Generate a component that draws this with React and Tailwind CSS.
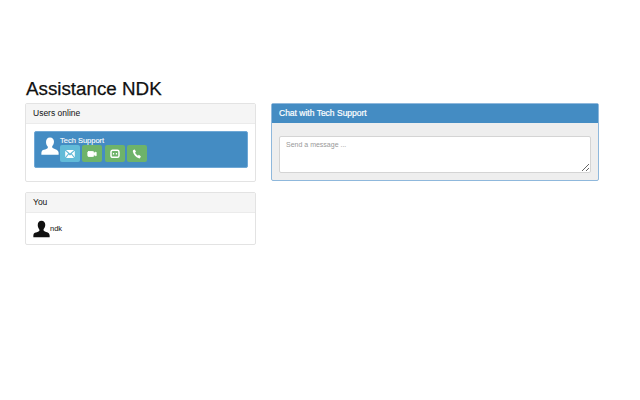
import { Video } from "lucide-react";

// Silhouette avatar used for both users
function Avatar({ className }) {
  return (
    <svg viewBox="0 0 24 24" className={className} fill="currentColor">
      <path d="M12 .5c-3.400 0-5.300 2.600-5.300 6 0 2.400.8 4.400 2 5.800.5.600.6 1.500.3 2.300-.5 1.100-3 1.800-5 2.500C2.200 17.300.8 18.500.5 21v2.500h23V21c-.3-2.500-1.700-3.700-3.500-4.400-2-.7-4.500-1.400-5-2.500-.3-.8-.2-1.700.3-2.300 1.200-1.400 2-3.400 2-5.800C17.300 3.100 15.400.5 12 .5z" />
    </svg>
  );
}

function MailIcon() {
  return (
    <svg viewBox="0 0 12 10" className="w-[10px] h-[8px]" fill="currentColor">
      <path d="M1 0h10L6 4.500z" />
      <path d="M0 1v8l3.700-4.500zM12 1v8L8.300 4.500zM1 10h10L7.600 5.500 6 6.800 4.400 5.500z" />
    </svg>
  );
}

function ChatIcon() {
  return (
    <svg viewBox="0 0 12 12" className="w-[10px] h-[10px]" fill="none" stroke="currentColor" strokeWidth="1.800">
      <rect x="1.200" y="1.500" width="9.600" height="8.500" rx="2" />
      <path d="M3.500 5.700h1.500M7 5.700h1.500" />
    </svg>
  );
}

function PhoneIcon() {
  return (
    <svg viewBox="0 0 12 12" className="w-[10px] h-[10px]" fill="currentColor">
      <path d="M1.500 1.200 3.300.6l1.500 2.600-1.100 1c.5 1.500 1.800 3 3.400 3.800l1.100-1 2.400 1.700-.7 1.900c-.3.600-1 .8-1.700.6C4.700 9.900 1.900 6.900 1 3c-.1-.7.100-1.400.5-1.800z" />
    </svg>
  );
}

function ActionButton({ color, children }) {
  return (
    <div className={`w-5 h-[17px] rounded-[2px] flex items-center justify-center text-white ${color}`}>
      {children}
    </div>
  );
}

export default function App() {
  return (
    <div className="w-[640px] h-[400px] bg-white text-[#111] px-[25px] pt-[77px] font-['Liberation_Sans',sans-serif] overflow-hidden">
      <h1 className="text-[18.8px] leading-[24px] mb-[2px] ml-[1px] [-webkit-text-stroke:0.25px_#111]">Assistance NDK</h1>

      <div className="flex gap-[15px] items-start">
        {/* Left column */}
        <div className="w-[231px] flex flex-col gap-[10px]">
          <div className="border border-[#e3e3e3] rounded-[2px] bg-white">
            <div className="h-[20px] bg-[#f5f5f5] border-b border-[#ebebeb] px-[7px] flex items-center text-[8.5px]">
              Users online
            </div>
            <div className="pl-[8px] pr-[7px] pt-[7px] pb-[13px]">
              <div className="h-[37px] bg-[#448cc3] border border-[#6fa8d6] rounded-[2px] flex pl-[6px] pt-[4px] text-white">
                <Avatar className="w-[18px] h-[18px] mt-[1px] text-white" />
                <div className="ml-[1px]">
                  <div className="text-[7.5px] leading-[9px] [-webkit-text-stroke:0.1px_white]">Tech Support</div>
                  <div className="flex gap-[2.4px]">
                    <ActionButton color="bg-[#62bbd8]">
                      <MailIcon />
                    </ActionButton>
                    <ActionButton color="bg-[#6eb36a]">
                      <Video size={10} strokeWidth={2} fill="currentColor" />
                    </ActionButton>
                    <ActionButton color="bg-[#6eb36a]">
                      <ChatIcon />
                    </ActionButton>
                    <ActionButton color="bg-[#6eb36a]">
                      <PhoneIcon />
                    </ActionButton>
                  </div>
                </div>
              </div>
            </div>
          </div>

          <div className="border border-[#e3e3e3] rounded-[2px] bg-white">
            <div className="h-[20px] bg-[#f5f5f5] border-b border-[#ebebeb] px-[7px] flex items-center text-[8.5px]">
              You
            </div>
            <div className="h-[31px] px-[7px] flex items-center text-[7.5px]">
              <Avatar className="w-[17px] h-[18px] text-[#111]" />
              <span>ndk</span>
            </div>
          </div>
        </div>

        {/* Chat panel */}
        <div className="w-[328px] border border-[#8fb8dc] rounded-[2px] bg-[#eee]">
          <div className="h-[19px] bg-[#448cc3] text-white flex items-center px-[7px] text-[8.5px] [-webkit-text-stroke:0.2px_white]">
            Chat with Tech Support
          </div>
          <div className="px-[7px] pt-[13px] pb-[7px]">
            <textarea
              readOnly
              placeholder="Send a message ..."
              className="block w-full h-[37px] bg-white border border-[#d4d4d4] rounded-[2px] px-[6px] py-[3px] text-[7px] leading-[10px] outline-none placeholder:text-[#999]"
            />
          </div>
        </div>
      </div>
    </div>
  );
}
